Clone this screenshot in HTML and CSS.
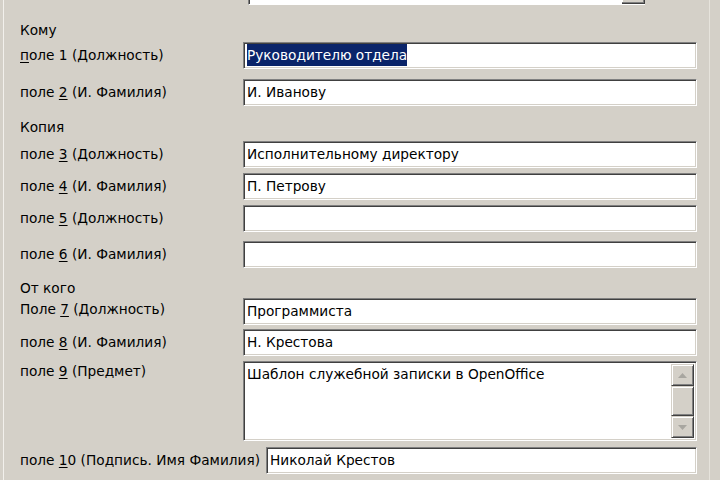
FILE: index.html
```html
<!DOCTYPE html>
<html lang="ru">
<head>
<meta charset="utf-8">
<title>Служебная записка</title>
<link rel="stylesheet" href="styles.css">
</head>
<body>
<div class="panel">
  <div class="topbox"><div class="topfill"></div><div class="topbtn"></div></div>

  <div class="heading h-komu">Кому</div>
  <div class="row mt4"><span class="label"><u>п</u>оле 1 (Должность)</span><div class="field"><span class="sel">Руководителю отдела</span></div></div>
  <div class="row mt10"><span class="label">поле <u>2</u> (И. Фамилия)</span><div class="field">И. Иванову</div></div>

  <div class="heading h-kopiya">Копия</div>
  <div class="row mt6"><span class="label">поле <u>3</u> (Должность)</span><div class="field">Исполнительному директору</div></div>
  <div class="row mt5"><span class="label">поле <u>4</u> (И. Фамилия)</span><div class="field">П. Петрову</div></div>
  <div class="row mt5"><span class="label">поле <u>5</u> (Должность)</span><div class="field"></div></div>
  <div class="row mt9"><span class="label">поле <u>6</u> (И. Фамилия)</span><div class="field"></div></div>

  <div class="heading h-otkogo">От кого</div>
  <div class="row mt2"><span class="label lift">Поле <u>7</u> (Должность)</span><div class="field">Программиста</div></div>
  <div class="row mt4"><span class="label">поле <u>8</u> (И. Фамилия)</span><div class="field">Н. Крестова</div></div>
  <div class="row row-tall mt5"><span class="label label-top">поле <u>9</u> (Предмет)</span>
    <div class="field area">
      <div class="area-text">Шаблон служебной записки в OpenOffice</div>
      <div class="scroll">
        <div class="sbtn up"><svg width="9" height="5" viewBox="0 0 9 5"><path d="M0 5 L4.5 0 L9 5 Z" fill="#a8a6a0"/></svg></div>
        <div class="sbtn thumb"></div>
        <div class="sbtn down"><svg width="9" height="5" viewBox="0 0 9 5"><path d="M0 0 L4.5 5 L9 0 Z" fill="#a8a6a0"/></svg></div>
      </div>
    </div>
  </div>
  <div class="row row-last mt6"><span class="label label-wide">поле <u>1</u>0 (Подпись. Имя Фамилия)</span><div class="field field-narrow">Николай Крестов</div></div>
</div>
</body>
</html>
```

FILE: styles.css
```css
* { box-sizing: border-box; }
html, body {
  margin: 0;
  padding: 0;
  background: #d4d0c8;
  width: 720px;
  height: 480px;
  overflow: hidden;
}
body {
  font-family: "DejaVu Sans", "Liberation Sans", sans-serif;
  font-size: 13.7px;
  color: #000;
}
.panel {
  margin-left: 3px;
  width: 707px;
  height: 480px;
  border-left: 1px solid #f2f0ec;
  border-right: 1px solid #e6e3dc;
  padding-left: 16px;
}
.topbox {
  margin-left: 228px;
  width: 397px;
  height: 5px;
  display: flex;
  border-left: 1px solid #808080;
  border-bottom: 1px solid #ffffff;
  box-shadow: inset 1px 0 0 #404040;
}
.topfill { flex: 1; background: #fff; margin-left: 1px; }
.topbtn {
  width: 23px;
  background: #d4d0c8;
  border-right: 1px solid #404040;
  border-bottom: 1px solid #404040;
  box-shadow: inset -1px -1px 0 #808080, inset 1px 0 0 #fff;
}
.heading {
  height: 16px;
  line-height: 16px;
}
.h-komu { margin-top: 17px; }
.h-kopiya { margin-top: 13px; }
.h-otkogo { margin-top: 12px; }
.row {
  display: flex;
  align-items: center;
  height: 27px;
}
.row-tall { height: 80px; align-items: flex-start; }
.mt2 { margin-top: 2px; }
.mt4 { margin-top: 4px; }
.mt5 { margin-top: 5px; }
.mt6 { margin-top: 6px; }
.mt9 { margin-top: 9px; }
.mt10 { margin-top: 10px; }
.label {
  width: 223px;
  flex: none;
  white-space: nowrap;
  position: relative;
  top: -1px;
}
.lift { top: -3px; }
.label-top { padding-top: 2px; top: 0; }
.label-wide { width: 246px; }
.label u { text-underline-offset: 2px; }
.field {
  width: 454px;
  height: 27px;
  flex: none;
  background: #fff;
  border: 1px solid;
  border-color: #808080 #ffffff #ffffff #808080;
  box-shadow: inset 1px 1px 0 #404040, inset -1px -1px 0 #d4d0c8;
  padding: 1px 3px 0 3px;
  line-height: 22px;
  white-space: nowrap;
  overflow: hidden;
}
.field-narrow { width: 431px; }
.sel {
  display: inline-block;
  background: #0a246a;
  color: #fff;
  line-height: 22px;
}
.area {
  height: 80px;
  display: flex;
  padding: 2px 2px 2px 3px;
  line-height: 20px;
}
.area-text { flex: 1; }
.scroll {
  width: 23px;
  display: flex;
  flex-direction: column;
}
.sbtn {
  background: #d4d0c8;
  border: 1px solid;
  border-color: #d4d0c8 #404040 #404040 #d4d0c8;
  box-shadow: inset 1px 1px 0 #fff, inset -1px -1px 0 #808080;
  display: flex;
  align-items: center;
  justify-content: center;
}
.up { height: 22px; }
.thumb { flex: 1; }
.down { height: 22px; }
```
